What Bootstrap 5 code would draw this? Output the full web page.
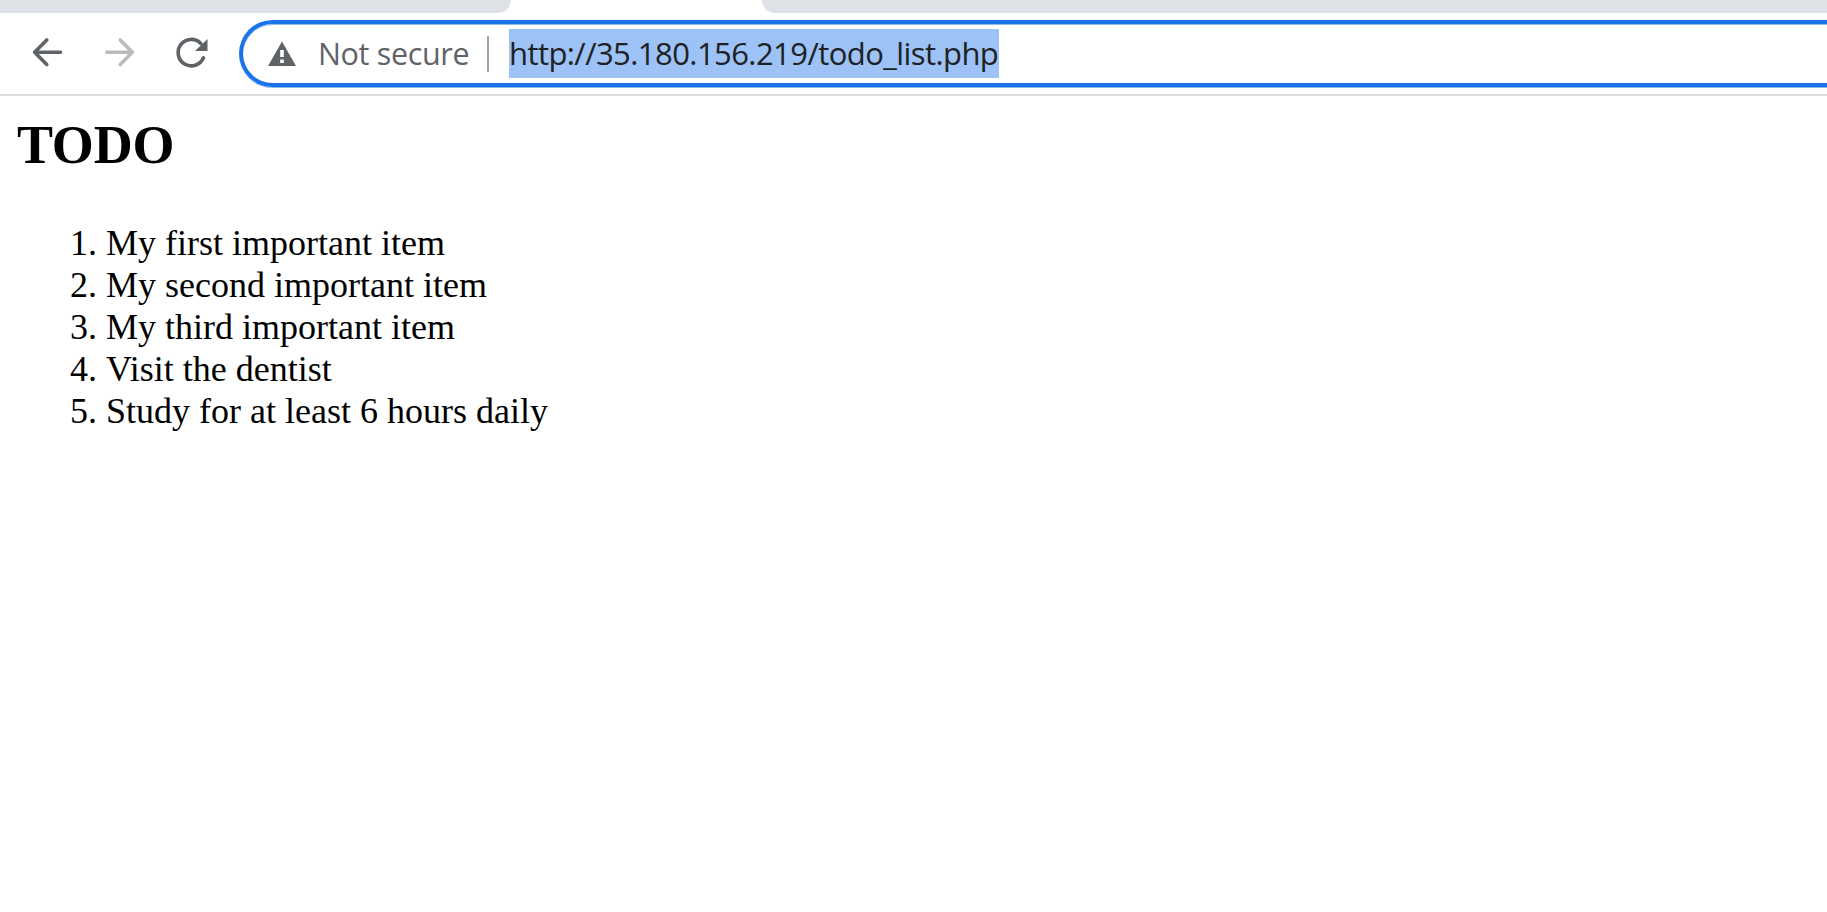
<!DOCTYPE html>
<html lang="en">
<head>
<meta charset="utf-8">
<title>TODO</title>
<link href="https://cdn.jsdelivr.net/npm/bootstrap@5.3.0/dist/css/bootstrap.min.css" rel="stylesheet">
<style>
  body { background: #fff; color: #000; overflow: hidden; }
  .tab-strip { height: 13px; }
  .tab-left, .tab-right { background: #dee1e6; }
  .tab-left { width: 511px; border-bottom-right-radius: 18px; }
  .tab-active { width: 251px; }
  .tab-right { border-bottom-left-radius: 18px; }
  .toolbar { height: 83px; padding: 7px 0 6px 29px; border-bottom: 2px solid #dcdcdc; }
  .tool-icons { gap: 32px; width: 210px; }
  .omnibox {
    height: 67px; border: 4px solid #1a73e8; border-right: 0;
    border-radius: 34px 0 0 34px; padding-left: 24px;
    box-shadow: inset 0 1px #8cb9f3, 0 1px #8cb9f3;
    font-family: "Open Sans", sans-serif; font-size: 31px; line-height: 49px;
  }
  .insecure { color: #5f6368; margin-left: 21px; width: 169px; font-size: 30.5px; letter-spacing: -.35px; }
  .divider { width: 2px; height: 36px; background: #a0a2a5; }
  .address { background: #9cc2f6; color: #202124; width: 490px; height: 49px; margin-left: 20px; letter-spacing: -.57px; }
  .page { padding: 19px 16px 0; font-family: "Liberation Serif", serif; }
  .page h1 { font-size: 54px; line-height: 60px; font-weight: 700; margin: 0 0 47px 1px; letter-spacing: -.2px; }
  .page ol { font-size: 36px; line-height: 42px; padding-left: 90px; }
</style>
</head>
<body>
<header>
  <div class="tab-strip d-flex">
    <div class="tab-left flex-shrink-0"></div>
    <div class="tab-active flex-shrink-0"></div>
    <div class="tab-right flex-grow-1"></div>
  </div>
  <nav class="toolbar d-flex align-items-start">
    <div class="tool-icons d-flex flex-shrink-0">
      <svg width="40" height="67" viewBox="29 20 40 67" fill="none" stroke="#5f6368" stroke-width="3.6" stroke-linecap="round" stroke-linejoin="round"><path d="M60.5 52.3H35M46.8 40 34.6 52.3 46.8 64.5"/></svg>
      <svg width="40" height="67" viewBox="101 20 40 67" fill="none" stroke="#babbbd" stroke-width="3.6" stroke-linecap="round" stroke-linejoin="round"><path d="M106.8 52.3H132M120.2 40 132.4 52.3 120.2 64.5"/></svg>
      <svg width="40" height="67" viewBox="173 20 40 67" fill="none"><path d="M200.8 43.4A13.2 13.2 0 1 0 203.5 57.8" stroke="#5f6368" stroke-width="3.6" stroke-linecap="round"/><path d="M207.5 39V51H195Z" fill="#5f6368"/></svg>
    </div>
    <div class="omnibox d-flex align-items-center flex-grow-1">
      <svg class="flex-shrink-0" width="30" height="26" viewBox="267 41 30 26"><path fill="#5f6368" fill-rule="evenodd" d="M282 41.5 296 66H268ZM280.2 50V57H283.8V50ZM280.2 59.5V63H283.8V59.5Z"/></svg>
      <span class="insecure text-nowrap">Not secure</span>
      <span class="divider"></span>
      <span class="address text-nowrap">http://35.180.156.219/todo_list.php</span>
    </div>
  </nav>
</header>
<main class="page">
  <h1>TODO</h1>
  <ol class="mb-0">
    <li>My first important item</li>
    <li>My second important item</li>
    <li>My third important item</li>
    <li>Visit the dentist</li>
    <li>Study for at least 6 hours daily</li>
  </ol>
</main>
<script src="https://cdn.jsdelivr.net/npm/bootstrap@5.3.0/dist/js/bootstrap.bundle.min.js"></script>
</body>
</html>
